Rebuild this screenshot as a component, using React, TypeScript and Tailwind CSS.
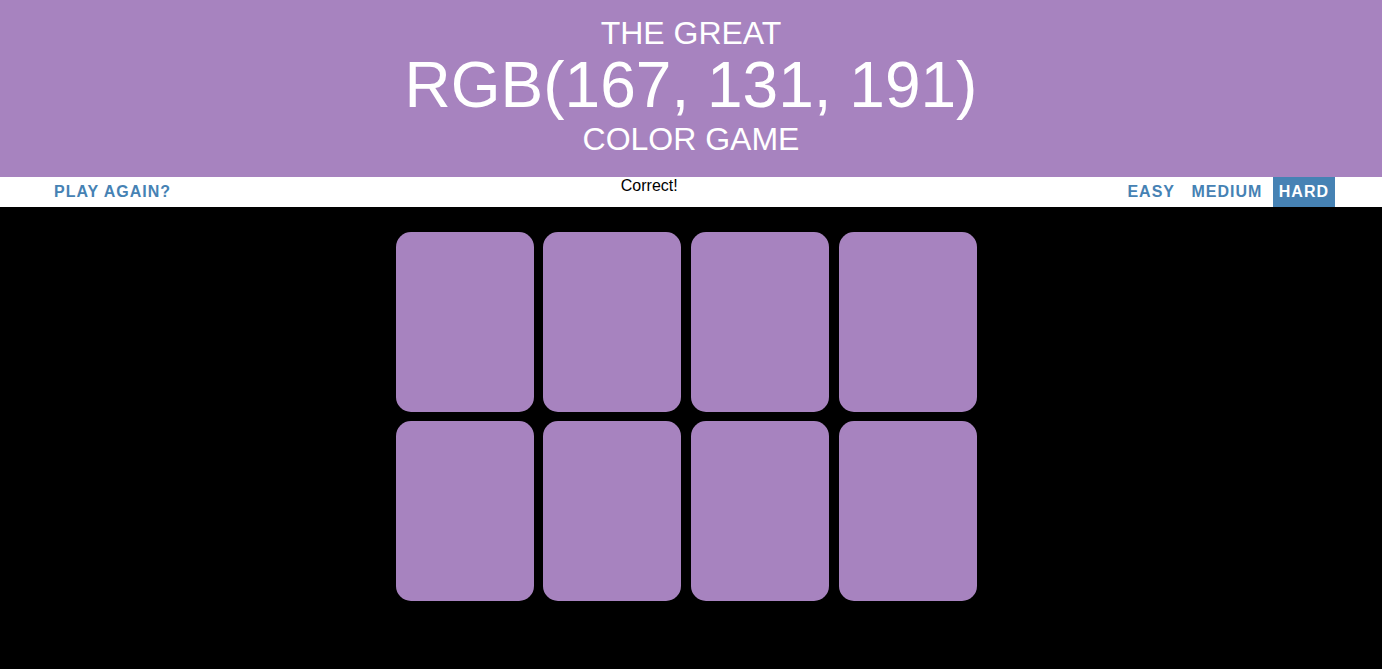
import React from "react";

export default function App() {
  const color = "#a783bf";
  const squares = Array.from({ length: 8 });
  return (
    <div
      className="min-h-screen bg-black"
      style={{ fontFamily: '"Liberation Sans", Arial, sans-serif' }}
    >
      <h1 className="bg-[#a783bf] text-white text-center font-normal uppercase pt-[17px] pb-[18.5px] text-[32px]">
        <div className="leading-[32.5px]">The Great</div>
        <div className="text-[64px] leading-[70px]">RGB(167, 131, 191)</div>
        <div className="leading-[39px]">Color Game</div>
      </h1>
      <div className="bg-white h-[30px] pl-[48px] pr-[47px] flex justify-between items-start">
        <button className="h-[30px] px-[6px] text-[16px] font-bold uppercase tracking-[1px] text-[#4682b4] leading-[normal]">
          Play Again?
        </button>
        <span className="text-[16px] text-black leading-[normal]">Correct!</span>
        <div className="flex gap-[4.45px]">
          <button className="h-[30px] px-[6px] text-[16px] font-bold uppercase tracking-[1px] text-[#4682b4] leading-[normal]">
            Easy
          </button>
          <button className="h-[30px] px-[6px] text-[16px] font-bold uppercase tracking-[1px] text-[#4682b4] leading-[normal]">
            Medium
          </button>
          <button className="h-[30px] px-[6px] text-[16px] font-bold uppercase tracking-[1px] text-white bg-[#4682b4] leading-[normal]">
            Hard
          </button>
        </div>
      </div>
      <div className="w-[600px] mx-auto mt-[20px] flex flex-wrap">
        {squares.map((_, i) => (
          <div
            key={i}
            className="w-[138px] h-[180px] m-[4.83px] rounded-[15px]"
            style={{ backgroundColor: color }}
          />
        ))}
      </div>
    </div>
  );
}
